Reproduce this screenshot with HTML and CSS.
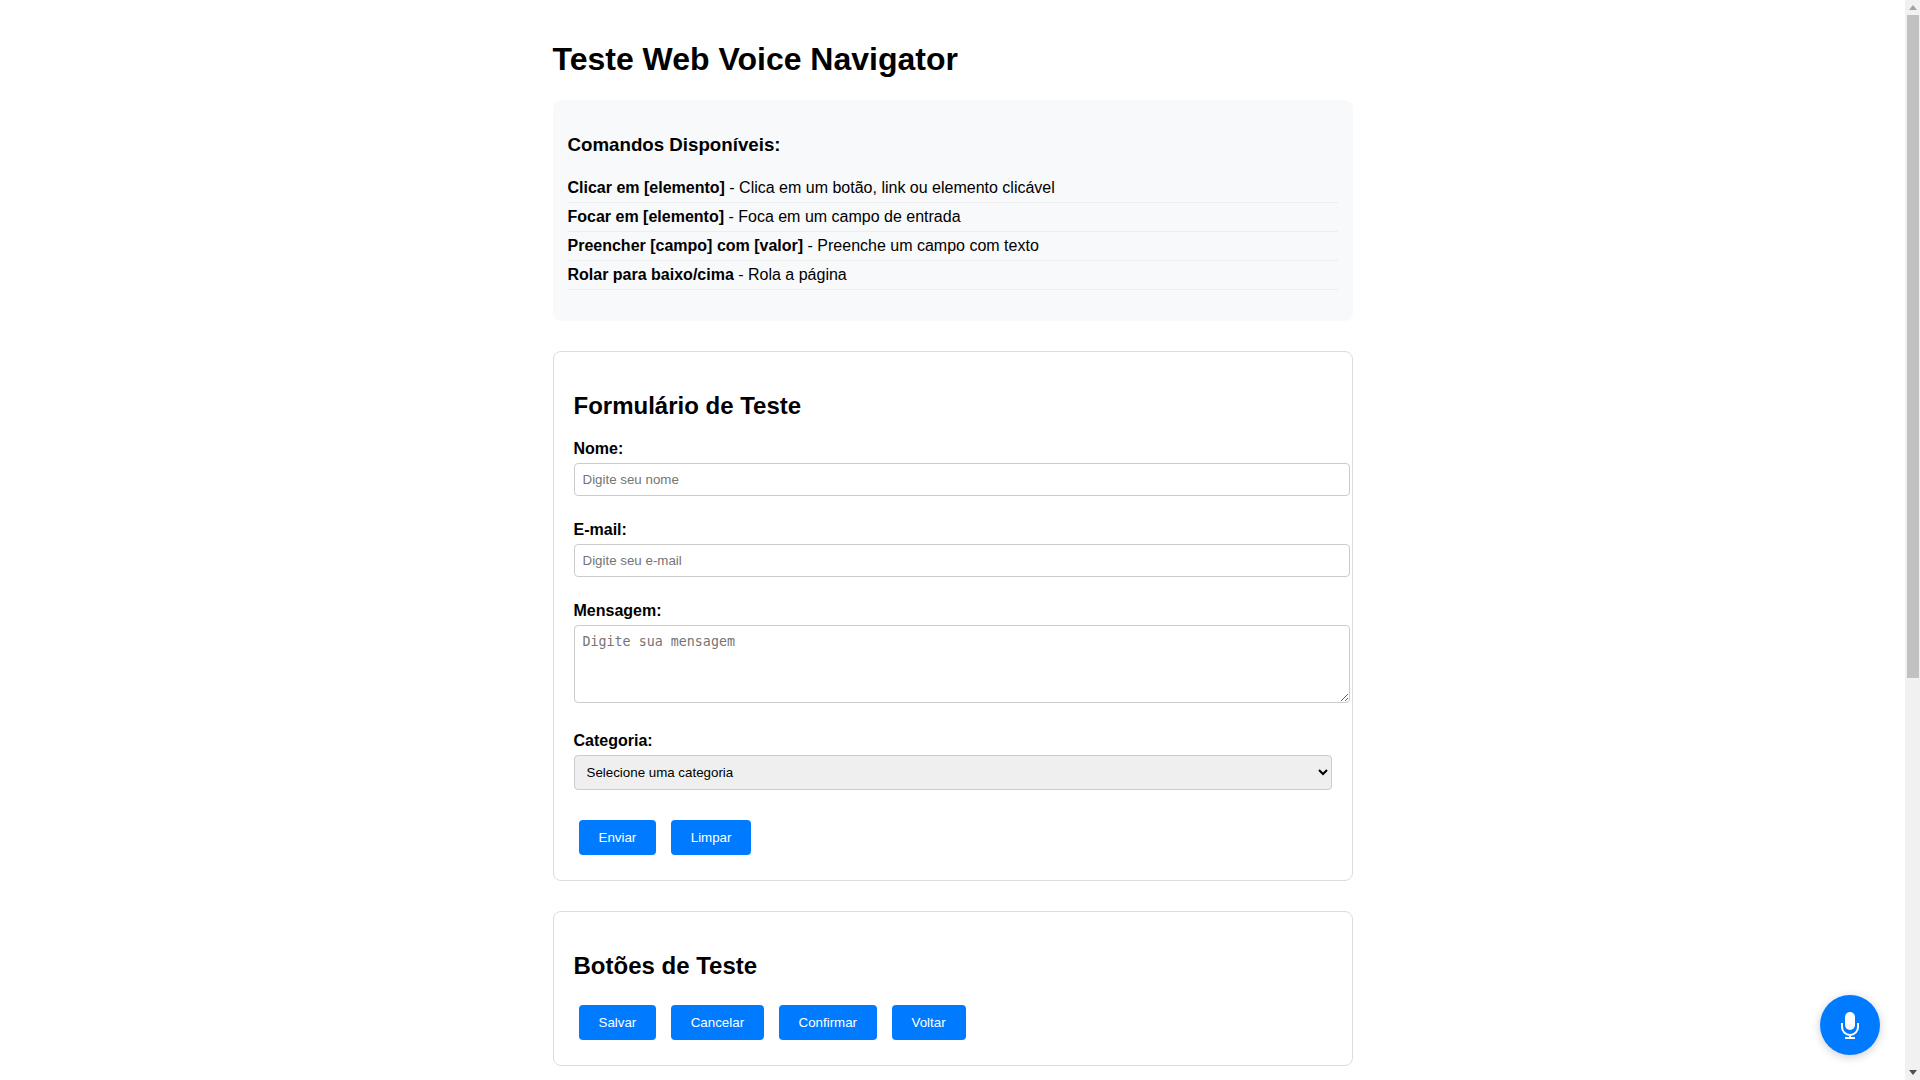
FILE: index.html
```html
<!DOCTYPE html>
<html lang="pt-BR">
<head>
    <meta charset="utf-8">
    <title>Teste Web Voice Navigator</title>
    <link rel="stylesheet" href="styles.css">
</head>
<body>
    <h1>Teste Web Voice Navigator</h1>

    <div class="comandos">
        <h3>Comandos Disponíveis:</h3>
        <ul>
            <li><strong>Clicar em [elemento]</strong> - Clica em um botão, link ou elemento clicável</li>
            <li><strong>Focar em [elemento]</strong> - Foca em um campo de entrada</li>
            <li><strong>Preencher [campo] com [valor]</strong> - Preenche um campo com texto</li>
            <li><strong>Rolar para baixo/cima</strong> - Rola a página</li>
        </ul>
    </div>

    <div class="secao">
        <h2>Formulário de Teste</h2>
        <form>
            <div class="grupo">
                <label for="nome">Nome:</label>
                <input type="text" id="nome" placeholder="Digite seu nome">
            </div>
            <div class="grupo">
                <label for="email">E-mail:</label>
                <input type="email" id="email" placeholder="Digite seu e-mail">
            </div>
            <div class="grupo">
                <label for="mensagem">Mensagem:</label>
                <textarea id="mensagem" rows="4" placeholder="Digite sua mensagem"></textarea>
            </div>
            <div class="grupo">
                <label for="categoria">Categoria:</label>
                <select id="categoria">
                    <option>Selecione uma categoria</option>
                </select>
            </div>
            <button type="button">Enviar</button>
            <button type="button">Limpar</button>
        </form>
    </div>

    <div class="secao">
        <h2>Botões de Teste</h2>
        <button type="button">Salvar</button>
        <button type="button">Cancelar</button>
        <button type="button">Confirmar</button>
        <button type="button">Voltar</button>
    </div>

    <button type="button" class="microfone" aria-label="Microfone">
        <svg width="18" height="27" viewBox="0 0 18 27">
            <rect x="4" y="0" width="10" height="18" rx="5" fill="#fff"/>
            <path d="M1 11v4a8 8 0 0 0 16 0v-4M9 23v3M4 25.9h10" fill="none" stroke="#fff" stroke-width="2"/>
        </svg>
    </button>

    <div class="barra">
        <div class="seta"><span class="seta-cima"></span></div>
        <div class="trilho"><div class="polegar"></div></div>
        <div class="seta"><span class="seta-baixo"></span></div>
    </div>
</body>
</html>
```
FILE: styles.css
```css
html {
    padding-right: 15px;
}

body {
    font-family: "Liberation Sans", Arial, sans-serif;
    max-width: 800px;
    margin: 0 auto;
    padding: 20px;
    color: #000;
}

h1 {
    font-size: 32px;
}

.comandos {
    background-color: #f8f9fa;
    padding: 15px;
    border-radius: 8px;
    margin-bottom: 30px;
}

.comandos ul {
    list-style: none;
    padding: 0;
}

.comandos li {
    padding: 5px 0;
    border-bottom: 1px solid #eee;
}

.secao {
    border: 1px solid #ddd;
    border-radius: 8px;
    padding: 20px;
    margin-bottom: 30px;
}

.grupo {
    margin-bottom: 20px;
}

label {
    display: block;
    font-weight: bold;
}

input,
textarea {
    width: 100%;
    padding: 8px;
    margin: 5px 0;
    border: 1px solid #ccc;
    border-radius: 4px;
}

input {
    font-family: "Liberation Sans", Arial, sans-serif;
    font-size: 13.33px;
}

textarea {
    font-family: "DejaVu Sans Mono", monospace;
    font-size: 13.33px;
}

select {
    width: 100%;
    padding: 8px;
    margin: 5px 0;
    border: 1px solid #ccc;
    border-radius: 4px;
    background-color: #efefef;
    font-family: "Liberation Sans", Arial, sans-serif;
    font-size: 13.33px;
}

button {
    background-color: #007bff;
    color: #fff;
    border: none;
    padding: 10px 20px;
    margin: 5px;
    border-radius: 4px;
    font-family: "Liberation Sans", Arial, sans-serif;
    font-size: 13.33px;
    cursor: pointer;
}

.microfone {
    position: fixed;
    right: 40px;
    bottom: 25px;
    width: 60px;
    height: 60px;
    margin: 0;
    padding: 0;
    border-radius: 50%;
    box-shadow: 0 2px 10px rgba(0, 0, 0, 0.2);
    display: flex;
    align-items: center;
    justify-content: center;
}

.barra {
    position: fixed;
    top: 0;
    right: 0;
    bottom: 0;
    width: 15px;
    background-color: #f1f1f1;
    display: flex;
    flex-direction: column;
}

.seta {
    height: 15px;
    display: flex;
    align-items: center;
    justify-content: center;
}

.seta-cima {
    border-left: 4px solid transparent;
    border-right: 4px solid transparent;
    border-bottom: 5px solid #a3a3a3;
}

.seta-baixo {
    border-left: 4px solid transparent;
    border-right: 4px solid transparent;
    border-top: 5px solid #505050;
}

.trilho {
    flex: 1;
}

.polegar {
    height: 663px;
    margin: 0 1px 0 2px;
    background-color: #c1c1c1;
}
```
